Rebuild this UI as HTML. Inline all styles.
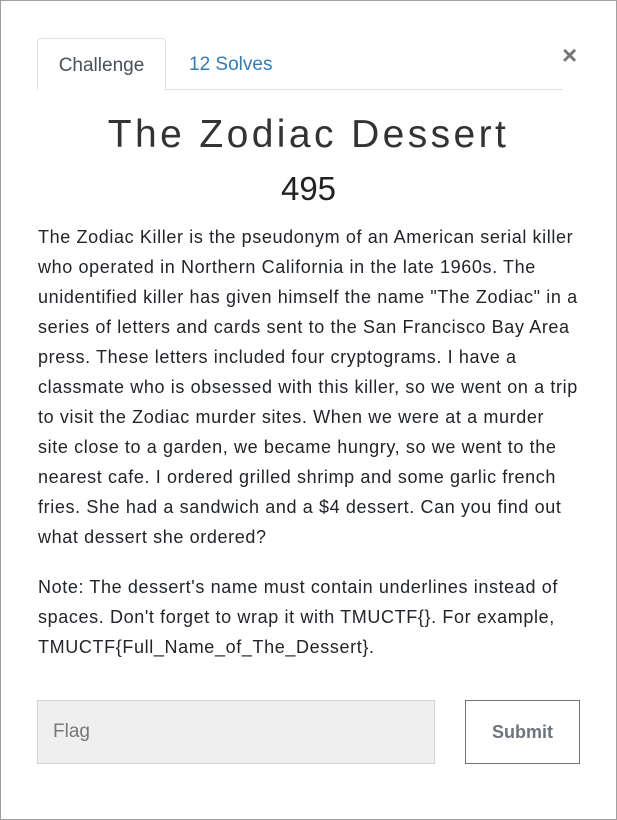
<!DOCTYPE html>
<html><head><style>
body{margin:0;width:617px;height:820px;overflow:hidden;font-family:"Liberation Sans",sans-serif;background:#fff}
.frame{position:absolute;left:0;top:0;width:615px;height:818px;border:1px solid #a0a0a0}
.tabs{position:absolute;left:37px;top:38px;width:526px;height:51px;border-bottom:1px solid #dee2e6}
.tab1{position:absolute;left:0;top:0;width:129px;height:52px;border:1px solid #dee2e6;border-bottom:none;border-radius:4px 4px 0 0;box-sizing:border-box;background:#fff;color:#495057;font-size:19px;text-align:center;line-height:54px}
.tab2{position:absolute;left:152px;top:0;line-height:54px;font-size:19px;color:#337ab7}
.x{position:absolute;left:562px;top:40px;font-size:26px;color:#777;font-weight:bold}
h1{position:absolute;top:113px;left:0;width:617px;margin:0;text-align:center;font-weight:300;font-size:39px;letter-spacing:3.4px;color:#333}
.pts{position:absolute;top:170px;left:0;width:617px;text-align:center;font-size:33px;color:#222}
.desc{position:absolute;left:38px;top:222px;width:560px;font-size:18px;line-height:30px;color:#212529;white-space:nowrap;letter-spacing:.62px}
.desc p{margin:0 0 20px}
.inp{position:absolute;left:37px;top:700px;width:396px;height:62px;background:#efefef;border:1px solid #ced4da;font-size:19px;color:#777;line-height:62px;text-indent:15px}
.btn{position:absolute;left:465px;top:700px;width:113px;height:62px;border:1px solid #6c757d;font-size:18px;font-weight:bold;color:#6c757d;text-align:center;line-height:62px}
</style></head><body>
<div class="frame"></div>
<div class="tabs"><div class="tab1">Challenge</div><div class="tab2">12 Solves</div></div>
<div class="x">×</div>
<h1>The Zodiac Dessert</h1>
<div class="pts">495</div>
<div class="desc"><p>The Zodiac Killer is the pseudonym of an American serial killer<br>who operated in Northern California in the late 1960s. The<br>unidentified killer has given himself the name "The Zodiac" in a<br>series of letters and cards sent to the San Francisco Bay Area<br>press. These letters included four cryptograms. I have a<br>classmate who is obsessed with this killer, so we went on a trip<br>to visit the Zodiac murder sites. When we were at a murder<br>site close to a garden, we became hungry, so we went to the<br>nearest cafe. I ordered grilled shrimp and some garlic french<br>fries. She had a sandwich and a $4 dessert. Can you find out<br>what dessert she ordered?</p><p>Note: The dessert's name must contain underlines instead of<br>spaces. Don't forget to wrap it with TMUCTF{}. For example,<br>TMUCTF{Full_Name_of_The_Dessert}.</p></div>
<div class="inp">Flag</div>
<div class="btn">Submit</div>
</body></html>
